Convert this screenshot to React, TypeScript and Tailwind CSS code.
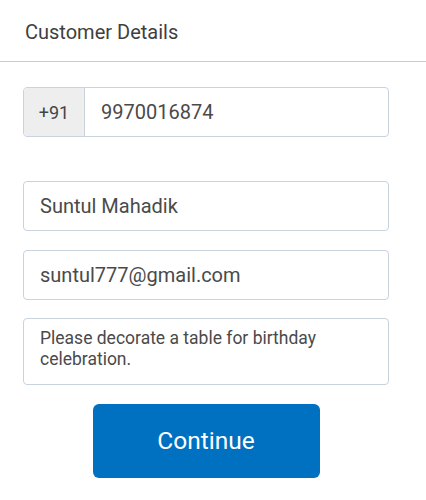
export default function App() {
  return (
    <div className="w-[426px] h-[500px] bg-white font-['Roboto',sans-serif] text-[#444]">
      {/* Header */}
      <div className="h-[62px] border-b border-[#ccc] pl-[25px] pt-[20px]">
        <h1 className="text-[20px] leading-[24px] text-[#3f3f3f]">Customer Details</h1>
      </div>

      <div className="pl-[23px] pr-[37px] pt-[25px] flex flex-col">
        {/* Phone */}
        <div className="flex h-[50px] border border-[#c9d3de] rounded-[4px] overflow-hidden">
          <div className="w-[61px] bg-[#eeeeee] border-r border-[#c9d3de] flex items-center justify-center text-[18px] text-[#444]">
            +91
          </div>
          <div className="flex-1 flex items-center pl-[16px] text-[20px] text-[#4a4a4a]">
            9970016874
          </div>
        </div>

        {/* Name */}
        <div className="mt-[44px] h-[50px] border border-[#c9d3de] rounded-[4px] flex items-center pl-[16px] text-[20px] text-[#4a4a4a]">
          Suntul Mahadik
        </div>

        {/* Email */}
        <div className="mt-[19px] h-[50px] border border-[#c9d3de] rounded-[4px] flex items-center pl-[16px] text-[20px] text-[#4a4a4a]">
          suntul777@gmail.com
        </div>

        {/* Notes */}
        <div className="mt-[18px] h-[67px] border border-[#c9d3de] rounded-[4px] pl-[16px] pr-[16px] pt-[9px] text-[17.5px] leading-[21px] text-[#4a4a4a]">
          Please decorate a table for birthday celebration.
        </div>

        {/* Button */}
        <div className="mt-[19px] flex justify-center">
          <button className="w-[227px] h-[74px] rounded-[6px] bg-[#0070c0] text-white text-[24.5px]">
            Continue
          </button>
        </div>
      </div>
    </div>
  );
}
